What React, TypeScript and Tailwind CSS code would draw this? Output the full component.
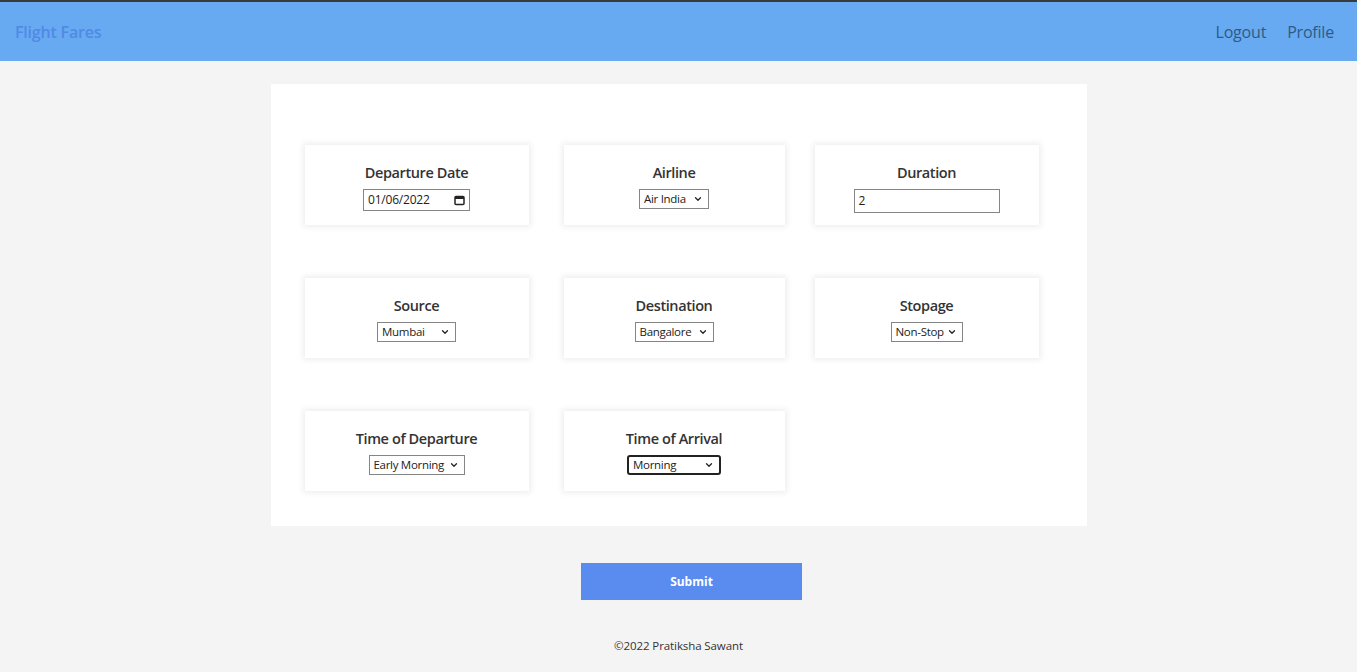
import { ChevronDown } from "lucide-react";

const font = { fontFamily: '"Open Sans", "Noto Sans", Arial, sans-serif' };

function Select({ value, width, focused }: { value: string; width: number; focused?: boolean }) {
  return (
    <div
      className={`relative flex h-[20px] items-center bg-white pl-[4px] text-[11.5px] tracking-[-0.3px] text-[#222] ${
        focused ? "rounded-[3px] border-2 border-[#222]" : "border border-[#858585]"
      }`}
      style={{ width }}
    >
      <span className="leading-none">{value}</span>
      <ChevronDown className="absolute right-[5px] top-1/2 h-[10px] w-[10px] -translate-y-1/2" strokeWidth={3} />
    </div>
  );
}

function Card({ label, children, className = "" }: { label: string; children: React.ReactNode; className?: string }) {
  return (
    <div
      className={`flex h-[80px] flex-col items-center bg-white pt-[17px] shadow-[0_0_6px_2px_rgba(0,0,0,0.07)] ${className}`}
    >
      <div className="text-[14.5px] font-semibold leading-[22px] tracking-[-0.4px] text-[#333]">{label}</div>
      <div className="mt-[5px]">{children}</div>
    </div>
  );
}

export default function App() {
  return (
    <div className="min-h-screen bg-[#f4f4f4]" style={font}>
      {/* nav */}
      <div className="border-t-2 border-[#3a3a3a] bg-[#67aaf1]">
        <div className="flex h-[59px] items-center justify-between pl-[15px] pr-[23px]">
          <span className="text-[16px] font-semibold tracking-[-0.2px] text-[#5089e6]">Flight Fares</span>
          <div className="flex gap-[21px] text-[16px] tracking-[-0.2px] text-[#2e5a86]">
            <span>Logout</span>
            <span>Profile</span>
          </div>
        </div>
      </div>

      {/* form panel */}
      <div className="mx-auto mt-[23px] w-[816px] bg-white pb-[35px] pl-[34px] pt-[61px]">
        <div className="flex flex-col gap-[53px]">
          <div className="flex">
            <Card label="Departure Date" className="w-[224px]">
              <div className="flex h-[22px] w-[107px] items-center justify-between border border-[#858585] px-[4px] text-[12px] tracking-[-0.2px] text-[#222]">
                <span>01/06/2022</span>
                <svg width="11" height="11" viewBox="0 0 11 11">
                  <rect x="1" y="1.5" width="9" height="8" rx="1" fill="none" stroke="#222" strokeWidth="1.5" />
                  <rect x="1" y="1.5" width="9" height="2.5" fill="#222" />
                </svg>
              </div>
            </Card>
            <Card label="Airline" className="ml-[35px] w-[221px]">
              <Select value="Air India" width={70} />
            </Card>
            <Card label="Duration" className="ml-[30px] w-[224px]">
              <div className="flex h-[24px] w-[146px] items-center border border-[#858585] px-[4px] text-[12px] text-[#222]">2</div>
            </Card>
          </div>
          <div className="flex">
            <Card label="Source" className="w-[224px]">
              <Select value="Mumbai" width={79} />
            </Card>
            <Card label="Destination" className="ml-[35px] w-[221px]">
              <Select value="Bangalore" width={79} />
            </Card>
            <Card label="Stopage" className="ml-[30px] w-[224px]">
              <Select value="Non-Stop" width={72} />
            </Card>
          </div>
          <div className="flex">
            <Card label="Time of Departure" className="w-[224px]">
              <Select value="Early Morning" width={96} />
            </Card>
            <Card label="Time of Arrival" className="ml-[35px] w-[221px]">
              <Select value="Morning" width={94} focused />
            </Card>
          </div>
        </div>
      </div>

      <div className="mt-[37px] flex justify-center">
        <button className="ml-[26px] h-[37px] w-[221px] bg-[#5a8cef] text-[12px] font-bold text-white">Submit</button>
      </div>

      <div className="mt-[37px] text-center text-[11.5px] tracking-[-0.1px] text-[#333]">©2022 Pratiksha Sawant</div>
    </div>
  );
}
